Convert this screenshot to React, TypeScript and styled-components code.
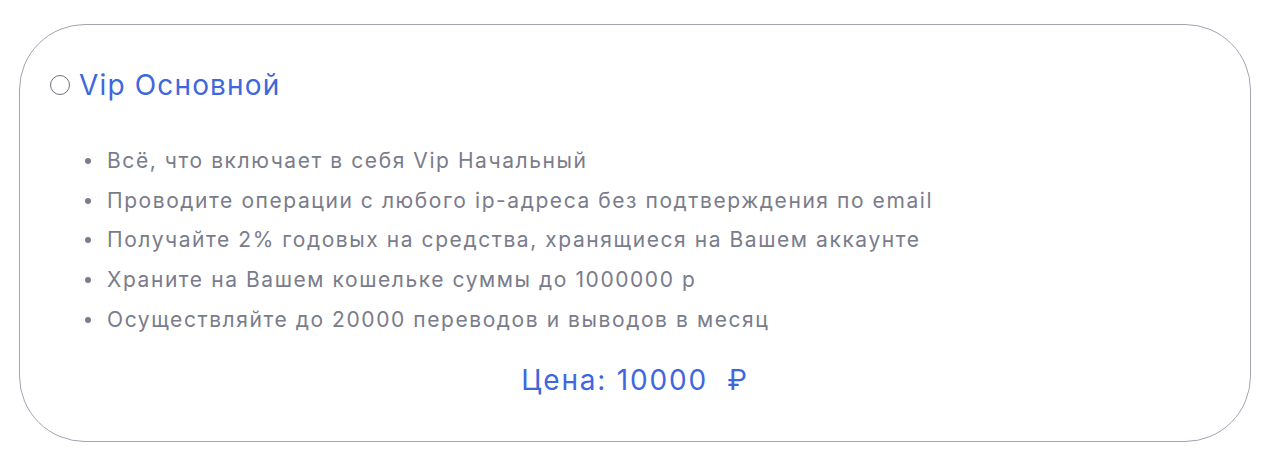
import React from "react";
import styled, { createGlobalStyle } from "styled-components";

const Global = createGlobalStyle`
  html, body { margin: 0; padding: 0; background: #ffffff; }
  body { font-family: Inter, "Noto Sans", sans-serif; }
`;

const Page = styled.div`
  padding: 24px 18px 14px 19px;
`;

const Card = styled.div`
  box-sizing: border-box;
  width: 1232px;
  height: 418px;
  border: 1.5px solid #a3a3b3;
  border-radius: 66px;
  padding: 45px 30px 0 30px;
  display: flex;
  flex-direction: column;
`;

const Header = styled.label`
  display: flex;
  align-items: center;
  gap: 9px;
  height: 30px;
`;

const Radio = styled.span`
  box-sizing: border-box;
  width: 20px;
  height: 20px;
  border-radius: 50%;
  border: 1.5px solid #707078;
  background: #fff;
`;

const Title = styled.span`
  color: #3f67dd;
  font-size: 28px;
  line-height: 30px;
  letter-spacing: 1.15px;
`;

const Features = styled.ul`
  margin: 41px 0 0 0;
  padding: 0 0 0 57px;
  list-style: none;
  display: flex;
  flex-direction: column;
`;

const Feature = styled.li`
  position: relative;
  color: #7a7c8b;
  font-size: 21px;
  line-height: 39.7px;
  letter-spacing: 1.57px;
  &::before {
    content: "";
    position: absolute;
    left: -22px;
    top: 17px;
    width: 6px;
    height: 6px;
    border-radius: 50%;
    background: #7a7c8b;
  }
`;

const Price = styled.div`
  margin-top: 24px;
  text-align: center;
  color: #3f67dd;
  font-size: 28px;
  line-height: 32px;
  letter-spacing: 1.8px;
`;

const features = [
  "Всё, что включает в себя Vip Начальный",
  "Проводите операции с любого ip-адреса без подтверждения по email",
  "Получайте 2% годовых на средства, хранящиеся на Вашем аккаунте",
  "Храните на Вашем кошельке суммы до 1000000 р",
  "Осуществляйте до 20000 переводов и выводов в месяц",
];

export default function App() {
  return (
    <Page>
      <Global />
      <Card>
        <Header>
          <Radio />
          <Title>Vip Основной</Title>
        </Header>
        <Features>
          {features.map((f) => (
            <Feature key={f}>{f}</Feature>
          ))}
        </Features>
        <Price>Цена: 10000&nbsp; ₽</Price>
      </Card>
    </Page>
  );
}
